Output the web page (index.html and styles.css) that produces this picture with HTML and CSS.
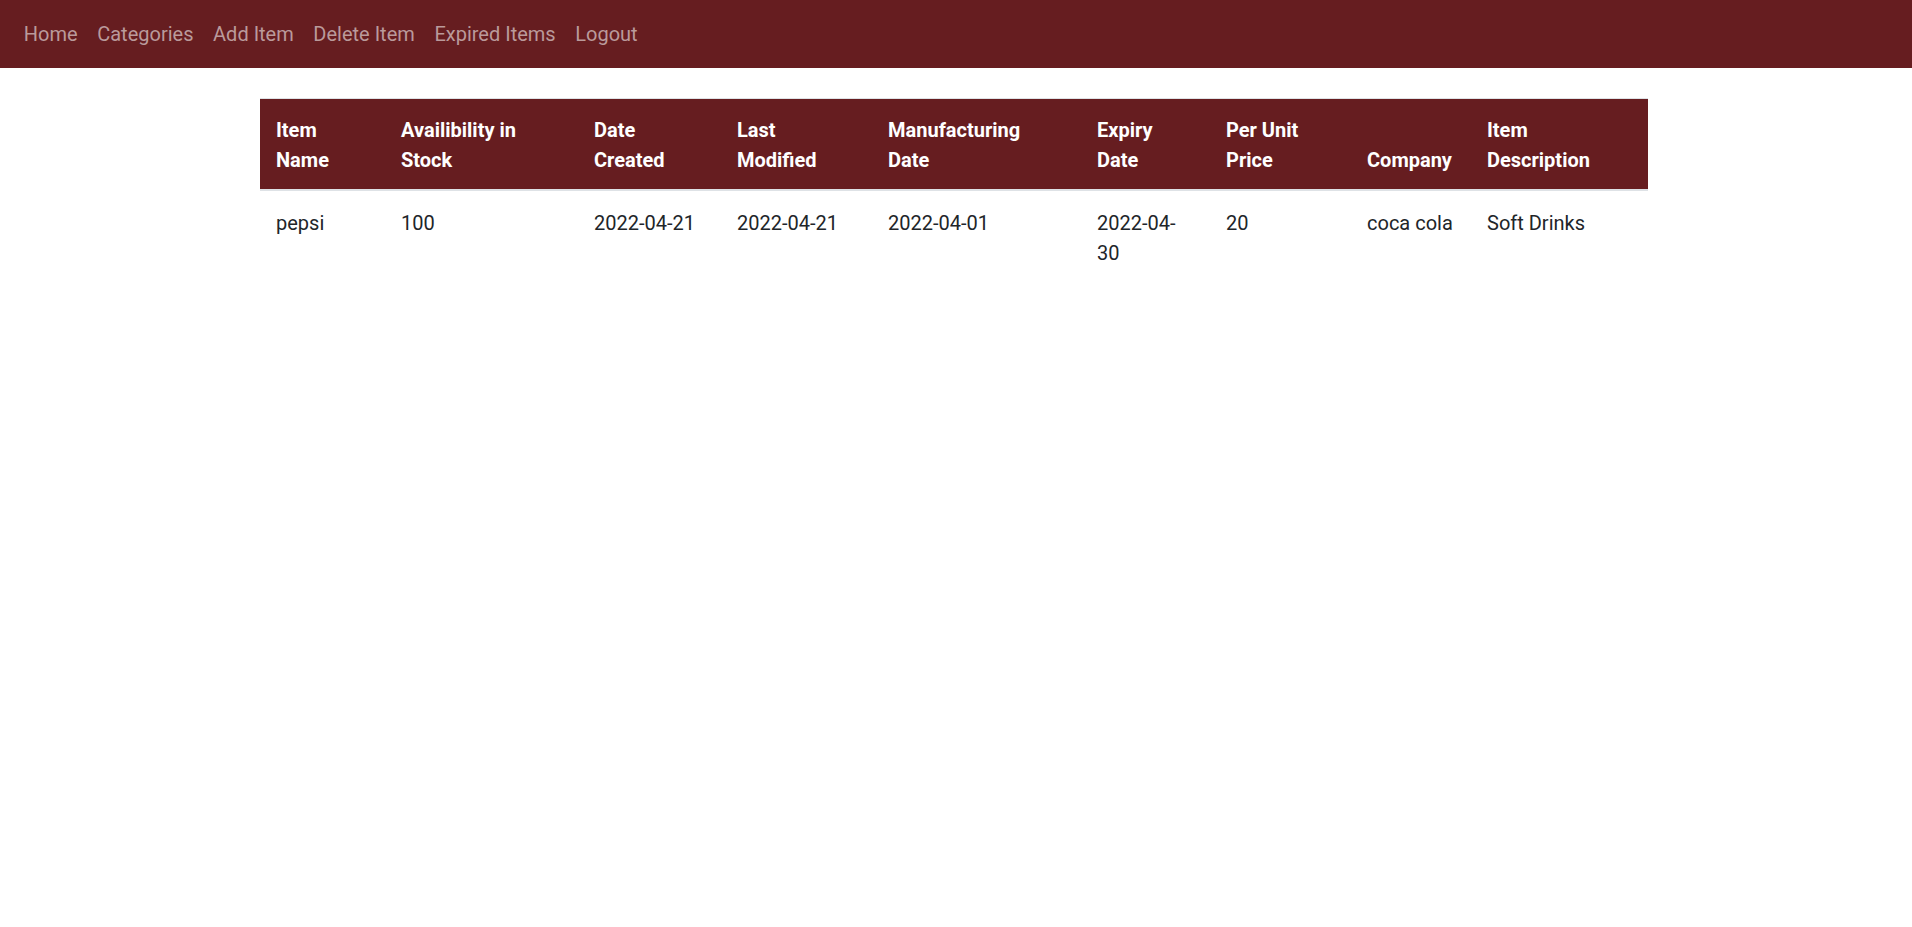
FILE: index.html
```html
<!DOCTYPE html>
<html lang="en">
<head>
<meta charset="utf-8">
<title>Items</title>
<link rel="stylesheet" href="styles.css">
</head>
<body>
<nav class="navbar">
  <ul class="nav-list">
    <li><a class="nav-link" href="#">Home</a></li>
    <li><a class="nav-link" href="#">Categories</a></li>
    <li><a class="nav-link" href="#">Add Item</a></li>
    <li><a class="nav-link" href="#">Delete Item</a></li>
    <li><a class="nav-link" href="#">Expired Items</a></li>
    <li><a class="nav-link" href="#">Logout</a></li>
  </ul>
</nav>
<main class="container">
  <table class="items-table">
    <colgroup>
      <col class="c-name">
      <col class="c-stock">
      <col class="c-created">
      <col class="c-modified">
      <col class="c-mfg">
      <col class="c-expiry">
      <col class="c-price">
      <col class="c-company">
      <col class="c-desc">
    </colgroup>
    <thead>
      <tr>
        <th>Item Name</th>
        <th>Availibility in Stock</th>
        <th>Date Created</th>
        <th>Last Modified</th>
        <th>Manufacturing Date</th>
        <th>Expiry Date</th>
        <th>Per Unit Price</th>
        <th>Company</th>
        <th>Item Description</th>
      </tr>
    </thead>
    <tbody>
      <tr>
        <td>pepsi</td>
        <td>100</td>
        <td>2022-04-21</td>
        <td>2022-04-21</td>
        <td>2022-04-01</td>
        <td>2022-04-30</td>
        <td>20</td>
        <td>coca cola</td>
        <td>Soft Drinks</td>
      </tr>
    </tbody>
  </table>
</main>
</body>
</html>
```
FILE: styles.css
```css
html, body {
  margin: 0;
  padding: 0;
}
body {
  font-family: "Segoe UI", Roboto, "Liberation Sans", sans-serif;
  font-size: 20px;
  line-height: 1.5;
  color: #212529;
  background: #ffffff;
}
.navbar {
  background: #661d20;
  height: 68px;
  display: flex;
  align-items: center;
  padding: 0 14px;
  box-sizing: border-box;
}
.nav-list {
  list-style: none;
  margin: 0;
  padding: 0;
  display: flex;
}
.nav-link {
  display: block;
  padding: 0 9.8px;
  color: #ba9a9b;
  text-decoration: none;
  line-height: 30px;
}
.container {
  width: 1388px;
  margin: 30px 0 0 260px;
}
.items-table {
  width: 1388px;
  border-collapse: collapse;
  table-layout: fixed;
  border-top: 1px solid #dee2e6;
}
.c-name { width: 125px; }
.c-stock { width: 193px; }
.c-created { width: 143px; }
.c-modified { width: 151px; }
.c-mfg { width: 209px; }
.c-expiry { width: 129px; }
.c-price { width: 141px; }
.c-company { width: 120px; }
.c-desc { width: 177px; }
.items-table th,
.items-table td {
  text-align: left;
}
.items-table thead th {
  padding: 16px 16px 14px;
  background: #661d20;
  color: #ffffff;
  font-weight: 700;
  vertical-align: bottom;
  border-bottom: 2px solid #dee2e6;
}
.items-table td {
  padding: 17px 16px 13px;
  font-weight: 400;
  vertical-align: top;
}
```
